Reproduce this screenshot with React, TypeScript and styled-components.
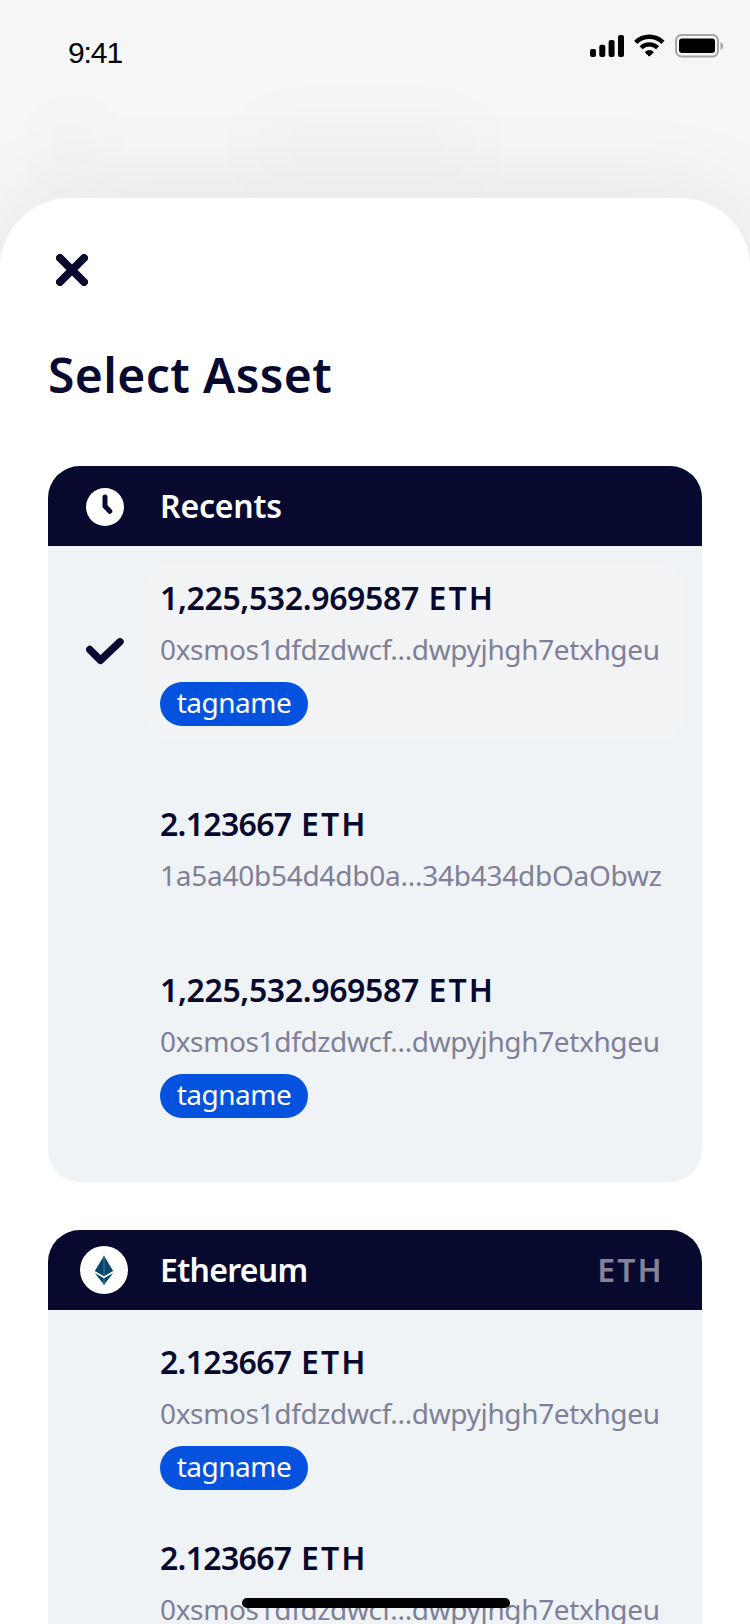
import React from "react";
import styled, { createGlobalStyle } from "styled-components";

const navy = "#07092f";
const uiFont = '"Noto Sans", "Open Sans", sans-serif';

const GlobalStyle = createGlobalStyle`
  body {
    margin: 0;
    background: #f6f6f6;
    font-family: ${uiFont};
    color: ${navy};
  }
`;

const Screen = styled.div`
  position: relative;
  display: flex;
  flex-direction: column;
  width: 750px;
  height: 1624px;
  overflow: hidden;
  background: #f6f6f6;
`;

const Haze = styled.div<{ $left: number; $width: number; $tint: string }>`
  position: absolute;
  top: 126px;
  left: ${(p) => p.$left}px;
  width: ${(p) => p.$width}px;
  height: 40px;
  border-radius: 20px;
  background: ${(p) => p.$tint};
  filter: blur(30px);
`;

const StatusBar = styled.header`
  position: relative;
  display: flex;
  justify-content: space-between;
  flex: none;
  height: 198px;
  box-sizing: border-box;
  padding: 34px 26px 0 68px;
`;

const Clock = styled.time`
  margin-top: 2px;
  font: 30px/34px "Liberation Sans", Arial, sans-serif;
  letter-spacing: -1.1px;
  color: #000;
`;

const StatusIcons = styled.div`
  display: flex;
  align-items: flex-start;
  gap: 10px;
`;

const Sheet = styled.main`
  position: relative;
  flex: 1 0 auto;
  box-sizing: border-box;
  padding: 48px 48px 0;
  border-radius: 70px 70px 0 0;
  background: #fff;
  box-shadow: 0 0 100px rgba(0, 0, 0, 0.08);
`;

const CloseButton = styled.button`
  display: flex;
  align-items: center;
  justify-content: center;
  width: 48px;
  height: 48px;
  padding: 0;
  border: 0;
  background: none;
`;

const Title = styled.h1`
  margin: 47px 0 0;
  font-size: 48px;
  font-weight: 600;
  line-height: 68px;
  letter-spacing: 0.4px;
`;

const Groups = styled.div`
  display: flex;
  flex-direction: column;
  gap: 48px;
  margin-top: 57px;
`;

const Card = styled.section`
  overflow: hidden;
  border-radius: 32px;
  background: #eff3f6;
`;

const CardHeader = styled.div`
  display: grid;
  grid-template-columns: 112px 1fr auto;
  align-items: center;
  height: 80px;
  padding-right: 38px;
  background: ${navy};
  color: #fff;
  font-size: 32px;
  font-weight: 600;
`;

const HeaderIcon = styled.span<{ $inset: number; $drop?: number }>`
  display: flex;
  padding-left: ${(p) => p.$inset}px;
  padding-top: ${(p) => p.$drop ?? 0}px;
`;

const HeaderName = styled.span<{ $tracking: number }>`
  padding-bottom: 1px;
  letter-spacing: ${(p) => p.$tracking}px;
`;

const HeaderSymbol = styled.span`
  padding-bottom: 1px;
  letter-spacing: 2.2px;
  color: #838497;
`;

const CardBody = styled.div<{ $gap: number }>`
  display: flex;
  flex-direction: column;
  gap: ${(p) => p.$gap}px;
  padding: 16px 16px 48px 0;
`;

const AssetRow = styled.div`
  display: grid;
  grid-template-columns: 96px 1fr;
  align-items: center;
`;

const CheckSlot = styled.span`
  display: flex;
  padding-left: 38px;
  padding-bottom: 2px;
`;

const AssetDetails = styled.div<{ $selected?: boolean; $tagged: boolean }>`
  padding: 11px 16px ${(p) => (p.$tagged ? 16 : 8)}px;
  border-radius: 32px;
  background: ${(p) => (p.$selected ? "#f2f3f5" : "transparent")};
  white-space: nowrap;
`;

const Amount = styled.div`
  display: flex;
  gap: 9.5px;
  font-size: 32px;
  font-weight: 600;
  line-height: 50px;
`;

const AmountValue = styled.span<{ $tracking: number }>`
  letter-spacing: ${(p) => p.$tracking}px;
`;

const AmountUnit = styled.span`
  letter-spacing: 2.2px;
`;

const Address = styled.div<{ $tracking: number }>`
  padding-top: 1px;
  font-size: 28px;
  line-height: 50px;
  letter-spacing: ${(p) => p.$tracking}px;
  color: #7f8098;
`;

const Tag = styled.div`
  display: flex;
  justify-content: center;
  width: 148px;
  height: 44px;
  margin-top: 8px;
  border-radius: 22px;
  background: #0452dd;
  color: #fff;
  font-size: 28px;
  line-height: 41px;
  letter-spacing: -0.5px;
`;

const HomeIndicator = styled.div`
  position: absolute;
  left: 242px;
  bottom: 16px;
  width: 268px;
  height: 10px;
  border-radius: 5px;
  background: #000;
`;

const SignalIcon = () => (
  <svg width="34" height="24" viewBox="0 0 34 24">
    <rect x="0" y="15" width="6" height="8" rx="2" />
    <rect x="9.3" y="10.7" width="6" height="12.3" rx="2" />
    <rect x="18.6" y="6" width="6" height="17" rx="2" />
    <rect x="28" y="1" width="6" height="22" rx="2" />
  </svg>
);

const WifiIcon = () => (
  <svg width="31" height="24" viewBox="0 0 31 24">
    <g fill="none" stroke="#000">
      <path d="M1.7 8.4A19.25 19.25 0 0 1 28.9 8.4" strokeWidth="4.5" />
      <path d="M7.03 13.73A11.7 11.7 0 0 1 23.57 13.73" strokeWidth="4.3" />
    </g>
    <path d="M15.3 22.2L11.3 18.2A5.7 5.7 0 0 1 19.3 18.2Z" stroke="#000" strokeWidth="1" strokeLinejoin="round" />
  </svg>
);

const BatteryIcon = () => (
  <svg width="49" height="24" viewBox="0 0 49 24">
    <rect x="1" y="1" width="42" height="21.5" rx="5.5" fill="none" stroke="#a4a4a4" strokeWidth="2" />
    <rect x="4" y="4.5" width="36" height="14.5" rx="3" />
    <path d="M45.500 8v8c1.600-.7 2.600-2.200 2.600-4s-1-3.300-2.600-4z" fill="#a4a4a4" />
  </svg>
);

const CloseIcon = () => (
  <svg width="32" height="32" viewBox="0 0 32 32" fill="none" stroke={navy} strokeWidth="8" strokeLinecap="round">
    <path d="M4 4l24 24M28 4L4 28" />
  </svg>
);

const ClockIcon = () => (
  <svg width="38" height="38" viewBox="0 0 38 38">
    <circle cx="19" cy="19" r="19" fill="#fff" />
    <path d="M19 9v9.300l4.800 5" fill="none" stroke={navy} strokeWidth="5" strokeLinecap="round" strokeLinejoin="round" />
  </svg>
);

const CheckIcon = () => (
  <svg width="38" height="27" viewBox="0 0 38 27" fill="none" stroke={navy} strokeWidth="7.5" strokeLinecap="round" strokeLinejoin="round">
    <path d="M3.800 11.600L14.500 22.300L34 3.800" />
  </svg>
);

const EthereumIcon = () => (
  <svg width="48" height="48" viewBox="0 0 48 48">
    <circle cx="24" cy="24" r="24" fill="#fff" />
    <path d="M24 9.700l-9.200 15.300 9.200 5.200 9.200-5.200z" fill="#07456a" />
    <path d="M14.800 27l9.200 5.200 9.200-5.200L24 38.700z" fill="#07456a" />
    <path d="M24 9.700V30.200M24 32.200V38.700" stroke="#3f7594" strokeWidth="1.2" />
  </svg>
);

interface Asset {
  value: string;
  address: string;
  tag?: string;
  selected?: boolean;
  valueTracking: number;
  addressTracking?: number;
}

const hexAddress = "0xsmos1dfdzdwcf...dwpyjhgh7etxhgeu";
const large = { value: "1,225,532.969587", valueTracking: -0.36 };
const small = { value: "2.123667", valueTracking: -0.7 };

const recents: Asset[] = [
  { ...large, address: hexAddress, tag: "tagname", selected: true },
  { ...small, address: "1a5a40b54d4db0a...34b434dbOaObwz", addressTracking: -0.25 },
  { ...large, address: hexAddress, tag: "tagname" },
];

const ethereum: Asset[] = [
  { ...small, address: hexAddress, tag: "tagname" },
  { ...small, address: hexAddress, tag: "tagname" },
];

const AssetItem = ({ asset }: { asset: Asset }) => (
  <AssetRow>
    <CheckSlot>{asset.selected && <CheckIcon />}</CheckSlot>
    <AssetDetails $selected={asset.selected} $tagged={Boolean(asset.tag)}>
      <Amount>
        <AmountValue $tracking={asset.valueTracking}>{asset.value}</AmountValue>
        <AmountUnit>ETH</AmountUnit>
      </Amount>
      <Address $tracking={asset.addressTracking ?? -0.36}>{asset.address}</Address>
      {asset.tag && <Tag>{asset.tag}</Tag>}
    </AssetDetails>
  </AssetRow>
);

export default function App() {
  return (
    <>
      <GlobalStyle />
      <Screen>
        <Haze $left={50} $width={46} $tint="rgba(0, 0, 0, 0.03)" />
        <Haze $left={250} $width={230} $tint="rgba(0, 0, 0, 0.025)" />
        <StatusBar>
          <Clock>9:41</Clock>
          <StatusIcons>
            <SignalIcon />
            <WifiIcon />
            <BatteryIcon />
          </StatusIcons>
        </StatusBar>
        <Sheet>
          <CloseButton aria-label="Close">
            <CloseIcon />
          </CloseButton>
          <Title>Select Asset</Title>
          <Groups>
            <Card>
              <CardHeader>
                <HeaderIcon $inset={38} $drop={2}>
                  <ClockIcon />
                </HeaderIcon>
                <HeaderName $tracking={-0.2}>Recents</HeaderName>
              </CardHeader>
              <CardBody $gap={46}>
                {recents.map((asset, i) => (
                  <AssetItem key={i} asset={asset} />
                ))}
              </CardBody>
            </Card>
            <Card>
              <CardHeader>
                <HeaderIcon $inset={32}>
                  <EthereumIcon />
                </HeaderIcon>
                <HeaderName $tracking={-0.7}>Ethereum</HeaderName>
                <HeaderSymbol>ETH</HeaderSymbol>
              </CardHeader>
              <CardBody $gap={16}>
                {ethereum.map((asset, i) => (
                  <AssetItem key={i} asset={asset} />
                ))}
              </CardBody>
            </Card>
          </Groups>
        </Sheet>
        <HomeIndicator />
      </Screen>
    </>
  );
}
